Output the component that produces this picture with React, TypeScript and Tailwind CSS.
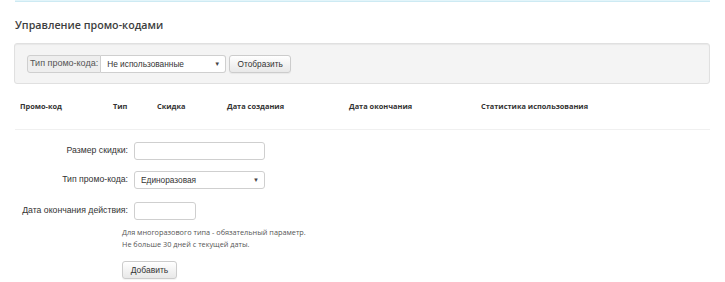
import React from "react";

const Caret = () => (
  <span className="text-[6px] leading-none text-[#444]">▼</span>
);

const columns = [
  { title: "Промо-код", w: "w-[93px]" },
  { title: "Тип", w: "w-[44px]" },
  { title: "Скидка", w: "w-[70px]" },
  { title: "Дата создания", w: "w-[122px]" },
  { title: "Дата окончания", w: "w-[132px]" },
  { title: "Статистика использования", w: "" },
];

const App = () => {
  return (
    <div className="w-[725px] h-[282px] bg-white overflow-hidden font-['Liberation_Sans',Arial,sans-serif] text-[#333]">
      <div className="ml-[15px] w-[695px] h-[2px] bg-[#e3f5fa] border-b border-[#cdeaf3]" />

      <div className="pl-[15px] pr-[15px]">
        <h1 className="mt-[14px] h-[18px] leading-[18px] text-[10.7px] font-semibold font-['Open_Sans',sans-serif] text-[#3d3d3d]">
          Управление промо-кодами
        </h1>

        <div className="mt-[9px] -ml-px h-[41px] rounded-[3px] border border-[#e0e0e0] bg-[#f4f4f4] shadow-[inset_0_1px_1px_rgba(0,0,0,0.05)] pt-[11px] pl-[12px] flex items-start">
          <div className="flex h-[18px]">
            <div className="flex items-center px-[2px] border border-[#cfcfcf] rounded-l-[3px] bg-[#eeeeee] text-[#555] text-[9px]">
              Тип промо-кода:
            </div>
            <div className="w-[125px] flex items-center justify-between pl-[6px] pr-[5px] border border-l-0 border-[#cfcfcf] rounded-r-[3px] bg-white text-[#333] text-[8.3px]">
              <span>Не использованные</span>
              <Caret />
            </div>
          </div>
          <button className="ml-[3px] h-[18px] w-[62px] text-[8.3px] text-[#333] border border-[#cccccc] rounded-[3px] bg-gradient-to-b from-white to-[#e8e8e8] shadow-[0_1px_1px_rgba(0,0,0,0.05)]">
            Отобразить
          </button>
        </div>

        <div className="mt-[15px] flex pl-[5px] h-[16px] items-center font-['Open_Sans',sans-serif] font-bold text-[7.4px] text-[#333]">
          {columns.map((c) => (
            <div key={c.title} className={c.w}>
              {c.title}
            </div>
          ))}
        </div>
        <div className="mt-[14px] h-px bg-[#f0f0f0]" />

        <div className="mt-[12px] flex flex-col text-[8.7px]">
          <div className="flex items-center h-[18px]">
            <div className="w-[113px] text-right text-[#333] whitespace-nowrap">Размер скидки:</div>
            <div className="ml-[6px] w-[131px] h-[18px] rounded-[3px] border border-[#cfcfcf] bg-white" />
          </div>

          <div className="mt-[11px] flex items-center h-[18px]">
            <div className="w-[113px] text-right text-[#333] whitespace-nowrap">Тип промо-кода:</div>
            <div className="ml-[6px] w-[131px] h-[18px] rounded-[3px] border border-[#cfcfcf] bg-white flex items-center justify-between pl-[6px] pr-[5px] text-[8.3px]">
              <span>Единоразовая</span>
              <Caret />
            </div>
          </div>

          <div className="mt-[13px] flex items-center h-[18px]">
            <div className="w-[113px] text-right text-[#333] whitespace-nowrap">Дата окончания действия:</div>
            <div className="ml-[6px] w-[62px] h-[18px] rounded-[3px] border border-[#cfcfcf] bg-white" />
          </div>

          <div className="ml-[107px] mt-[6px] font-['Open_Sans',sans-serif] text-[7.3px] leading-[12px] text-[#555]">
            <p>Для многоразового типа - обязательный параметр.</p>
            <p>Не больше 30 дней с текущей даты.</p>
          </div>

          <div className="ml-[107px] mt-[11px]">
            <button className="h-[18px] w-[55px] text-[8.5px] text-[#333] border border-[#cccccc] rounded-[3px] bg-gradient-to-b from-white to-[#e8e8e8] shadow-[0_1px_1px_rgba(0,0,0,0.05)]">
              Добавить
            </button>
          </div>
        </div>
      </div>
    </div>
  );
};

export default App;
